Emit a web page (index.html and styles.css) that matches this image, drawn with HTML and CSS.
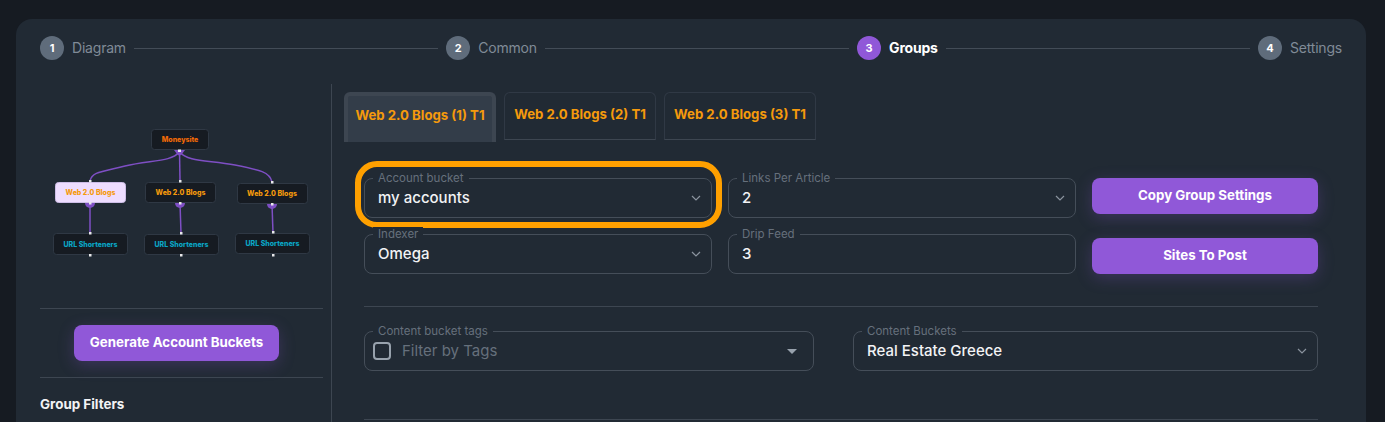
FILE: index.html
```html
<!DOCTYPE html>
<html lang="en">
<head>
  <meta charset="UTF-8" />
  <title>Campaign wizard</title>
  <link rel="stylesheet" href="styles.css">
</head>
<body>
  <div class="card">
    <div class="stepper">
      <div class="step"><span class="step-num">1</span><span class="step-label">Diagram</span></div>
      <div class="step-line"></div>
      <div class="step"><span class="step-num">2</span><span class="step-label">Common</span></div>
      <div class="step-line"></div>
      <div class="step active"><span class="step-num">3</span><span class="step-label">Groups</span></div>
      <div class="step-line"></div>
      <div class="step"><span class="step-num">4</span><span class="step-label">Settings</span></div>
    </div>

    <div class="content">
      <aside class="sidebar">
        <svg class="diagram" viewBox="40 84 283 224" width="283" height="224">
          <g class="edges">
            <path d="M179 152C172 162 150 160 125 166S92 172 90 181"/>
            <path d="M179.500 151L180 181"/>
            <path d="M180 152C187 162 210 160 235 165S270 172 272 182"/>
            <path d="M90 203V233"/>
            <path d="M180 203L181 233"/>
            <path d="M272 204L273 233"/>
          </g>
          <g class="cups">
            <path d="M174 150h11l-3 4-2.500 2-2.500-2z"/>
            <path d="M85 203h10a5 5 0 0 1-10 0z"/>
            <path d="M175 203h10a5 5 0 0 1-10 0z"/>
            <path d="M267 204h10a5 5 0 0 1-10 0z"/>
          </g>
          <rect class="node" x="151.500" y="129.500" width="57" height="20" rx="3"/>
          <rect class="node selected" x="55.500" y="182.500" width="70" height="20" rx="3"/>
          <rect class="node" x="145.500" y="182.500" width="70" height="20" rx="3"/>
          <rect class="node" x="237.500" y="183.500" width="70" height="20" rx="3"/>
          <rect class="node" x="53.500" y="233.500" width="74" height="21" rx="3"/>
          <rect class="node" x="144.500" y="234.500" width="74" height="20" rx="3"/>
          <rect class="node" x="235.500" y="233.500" width="74" height="20" rx="3"/>
          <text class="label money" x="180" y="142">Moneysite</text>
          <text class="label blogs" x="90.500" y="195">Web 2.0 Blogs</text>
          <text class="label blogs" x="180.500" y="195">Web 2.0 Blogs</text>
          <text class="label blogs" x="272" y="196">Web 2.0 Blogs</text>
          <text class="label short" x="90.500" y="247">URL Shorteners</text>
          <text class="label short" x="181.500" y="247">URL Shorteners</text>
          <text class="label short" x="272.500" y="246">URL Shorteners</text>
          <g class="dots">
            <rect x="178" y="149.500" width="3" height="2.500"/>
            <rect x="89" y="180" width="2.500" height="2.500"/>
            <rect x="179" y="180" width="2.500" height="2.500"/>
            <rect x="271" y="181" width="2.500" height="2.500"/>
            <rect x="89" y="202" width="2.500" height="2.500"/>
            <rect x="179" y="202" width="2.500" height="2.500"/>
            <rect x="271" y="203" width="2.500" height="2.500"/>
            <rect x="89" y="232" width="2.500" height="2.500"/>
            <rect x="180" y="232" width="2.500" height="2.500"/>
            <rect x="272" y="231" width="2.500" height="2.500"/>
            <rect x="89" y="254" width="2.500" height="2.500"/>
            <rect x="180" y="254" width="2.500" height="2.500"/>
            <rect x="272" y="254" width="2.500" height="2.500"/>
          </g>
        </svg>
        <div class="generate-row">
          <button class="btn" type="button">Generate Account Buckets</button>
        </div>
        <h3 class="filters-title">Group Filters</h3>
      </aside>

      <main class="panel">
        <div class="tabs">
          <div class="tab active">Web 2.0 Blogs (1) T1</div>
          <div class="tab">Web 2.0 Blogs (2) T1</div>
          <div class="tab">Web 2.0 Blogs (3) T1</div>
        </div>

        <div class="form-top">
          <div class="form-grid">
            <div class="field highlighted">
              <span class="field-label">Account bucket</span>
              <span class="field-value">my accounts</span>
              <svg class="chevron" viewBox="0 0 10 6" width="10" height="6"><path d="M1 1l4 4 4-4"/></svg>
            </div>
            <div class="field">
              <span class="field-label">Links Per Article</span>
              <span class="field-value">2</span>
              <svg class="chevron" viewBox="0 0 10 6" width="10" height="6"><path d="M1 1l4 4 4-4"/></svg>
            </div>
            <div class="field">
              <span class="field-label">Indexer</span>
              <span class="field-value">Omega</span>
              <svg class="chevron" viewBox="0 0 10 6" width="10" height="6"><path d="M1 1l4 4 4-4"/></svg>
            </div>
            <div class="field">
              <span class="field-label">Drip Feed</span>
              <span class="field-value">3</span>
            </div>
          </div>
          <div class="form-actions">
            <button class="btn wide" type="button">Copy Group Settings</button>
            <button class="btn wide" type="button">Sites To Post</button>
          </div>
        </div>

        <div class="form-middle">
          <div class="field tags">
            <span class="field-label">Content bucket tags</span>
            <span class="checkbox"></span>
            <span class="field-placeholder">Filter by Tags</span>
            <span class="caret"></span>
          </div>
          <div class="field buckets">
            <span class="field-label">Content Buckets</span>
            <span class="field-value">Real Estate Greece</span>
            <svg class="chevron" viewBox="0 0 10 6" width="10" height="6"><path d="M1 1l4 4 4-4"/></svg>
          </div>
        </div>
      </main>
    </div>
  </div>
</body>
</html>
```

FILE: styles.css
```css
html, body {
  height: 100%;
  overflow: hidden;
}
body {
  margin: 0;
  padding: 19px 19px 0 16px;
  box-sizing: border-box;
  background-color: #161b22;
  color: #fff;
  font-family: 'Inter', sans-serif;
}
.card {
  background-color: #212a34;
  border-radius: 16px 16px 0 0;
  height: 403px;
  overflow: hidden;
}

/* stepper */
.stepper {
  display: flex;
  align-items: center;
  padding: 17px 24px 0;
  height: 24px;
}
.step {
  display: flex;
  align-items: center;
  gap: 8px;
}
.step-num {
  width: 24px;
  height: 24px;
  border-radius: 50%;
  background-color: #5f6c7b;
  color: #fff;
  font-size: 11px;
  font-weight: 700;
  display: flex;
  align-items: center;
  justify-content: center;
}
.step-label {
  padding-bottom: 2px;
  font-size: 14px;
  letter-spacing: -0.2px;
  color: #808b97;
}
.step-line {
  flex: 1;
  height: 1px;
  margin: 0 8px;
  background-color: #434c57;
}
.step.active .step-num {
  background-color: #9058d8;
}
.step.active .step-label {
  color: #fff;
  font-weight: 700;
}

.content {
  display: flex;
  margin-top: 24px;
  padding-left: 24px;
}

/* left column */
.sidebar {
  width: 283px;
  padding-right: 8px;
  border-right: 1px solid #3d4651;
  height: 338px;
}
.diagram {
  display: block;
  border-bottom: 1px solid #3d4651;
}
.generate-row {
  display: flex;
  justify-content: center;
  padding: 16px 10px 16px 0;
  border-bottom: 1px solid #3d4651;
}
.filters-title {
  margin: 18px 0 0;
  font-size: 13.400px;
  font-weight: 700;
  color: #f2f3f5;
}
.diagram .edges path {
  fill: none;
  stroke: #7e4fc4;
  stroke-width: 1.500;
}
.diagram .cups path {
  fill: #7e4fc4;
}
.diagram .dots rect {
  fill: #e8e8ea;
}
.node {
  fill: #161b22;
  stroke: #2f3844;
}
.node.selected {
  fill: #eeddff;
  stroke: #cdbde6;
}
.label {
  font-size: 7px;
  font-weight: 800;
  text-anchor: middle;
}
.label.money {
  fill: #f26a07;
}
.label.blogs {
  fill: #f59a0c;
}
.label.short {
  fill: #0aa5c4;
}

/* buttons */
.btn {
  height: 36px;
  padding: 0 16px 2px;
  border: none;
  border-radius: 8px;
  background-color: #9058d8;
  color: #fff;
  font-family: inherit;
  font-size: 13.300px;
  font-weight: 700;
  box-shadow: 0 4px 16px rgba(144, 88, 216, 0.25);
}
.btn.wide {
  width: 226px;
}

/* right column */
.panel {
  flex: 1;
  padding: 8px 48px 0 12px;
}
.tabs {
  display: flex;
  gap: 8px;
  align-items: flex-start;
}
.tab {
  box-sizing: border-box;
  width: 152px;
  height: 48px;
  padding-top: 13px;
  border: 1px solid #303945;
  border-bottom-color: #3d4651;
  border-radius: 6px 6px 0 0;
  color: #f59a0c;
  font-size: 13.200px;
  font-weight: 700;
  text-align: center;
}
.tab.active {
  height: 50px;
  padding-top: 11px;
  border: 4px solid #3d4651;
  border-bottom: none;
  background-color: #333d49;
}

.form-top {
  display: flex;
  gap: 16px;
  margin: 36px 0 0 20px;
  padding-bottom: 32px;
  border-bottom: 1px solid #3d4651;
}
.form-grid {
  display: grid;
  grid-template-columns: 348px 348px;
  grid-auto-rows: 40px;
  column-gap: 16px;
  row-gap: 16px;
}
.form-actions {
  display: flex;
  flex-direction: column;
  gap: 24px;
}

.field {
  position: relative;
  box-sizing: border-box;
  height: 40px;
  display: flex;
  align-items: center;
  padding: 0 13px;
  border: 1px solid #454e59;
  border-radius: 8px;
}
.field-label {
  position: absolute;
  top: -8px;
  left: 8px;
  padding: 0 5px;
  background-color: #212a34;
  color: #66707c;
  font-size: 11.500px;
  line-height: 14px;
}
.field-value {
  padding-bottom: 2px;
  font-size: 15px;
  font-weight: 500;
  color: #f2f3f5;
}
.chevron {
  margin-left: auto;
  margin-right: -3px;
}
.chevron path {
  fill: none;
  stroke: #8a939e;
  stroke-width: 1.200;
}
.highlighted::after {
  content: "";
  position: absolute;
  top: -18px;
  bottom: -11px;
  left: -10px;
  right: -11px;
  border: 6px solid #ffa000;
  border-radius: 22px;
}

.form-middle {
  display: flex;
  justify-content: space-between;
  margin: 24px 0 0 20px;
  padding-bottom: 48px;
  border-bottom: 1px solid #3d4651;
}
.field.tags {
  width: 450px;
  padding: 0 8px;
}
.field.buckets {
  width: 465px;
}
.checkbox {
  box-sizing: border-box;
  width: 18px;
  height: 18px;
  border: 2px solid #98a2ad;
  border-radius: 4px;
}
.field-placeholder {
  margin-left: 11px;
  padding-bottom: 2px;
  font-size: 15px;
  color: #66707c;
}
.caret {
  margin-left: auto;
  margin-right: 8px;
  border-left: 5px solid transparent;
  border-right: 5px solid transparent;
  border-top: 5px solid #98a2ad;
}
```
